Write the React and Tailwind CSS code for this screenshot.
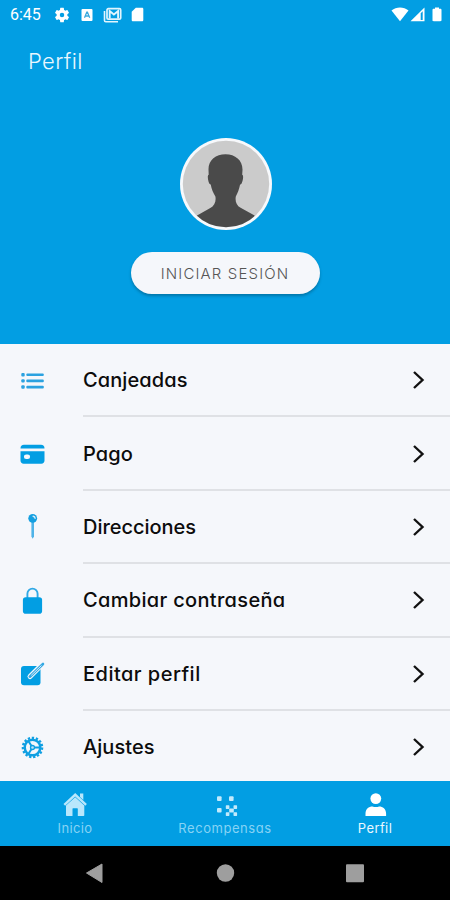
import React, { useState } from 'react';

const ListIcon = () => (
  <svg viewBox="0 0 30 30" className="w-[30px] h-[30px]" fill="#2ba2e0">
    <rect x="4.300" y="7" width="3.400" height="3.400" rx="1" />
    <rect x="4.300" y="13.200" width="3.400" height="3.400" rx="1" />
    <rect x="4.300" y="19.300" width="3.400" height="3.400" rx="1" />
    <rect x="9.300" y="7.400" width="17.500" height="2.700" rx="1" />
    <rect x="9.300" y="13.600" width="17.500" height="2.700" rx="1" />
    <rect x="9.300" y="19.700" width="17.500" height="2.700" rx="1" />
  </svg>
);

const CardIcon = () => (
  <svg viewBox="0 0 30 30" className="w-[30px] h-[30px]" fill="#029ee3">
    <path d="M3.500 9.500c0-2.600 1.200-3.700 3.500-3.700h17c2.300 0 3.500 1.100 3.500 3.700z" />
    <path
      fillRule="evenodd"
      d="M3.500 12.300h24v9.300c0 2-1.200 3.200-3.200 3.200H6.700c-2 0-3.200-1.200-3.200-3.200zM9.200 15.500a2.300 2.300 0 0 0 0 4.600h1.600a2.300 2.300 0 0 0 0-4.600z"
    />
  </svg>
);

const PinIcon = () => (
  <svg viewBox="0 0 30 30" className="w-[30px] h-[30px]">
    <path d="M14.400 9H17v15.500l-1.300 2.300-1.300-2.300z" fill="#4fb3e8" />
    <circle cx="15.700" cy="6.300" r="4.400" fill="#149fe0" />
    <path d="M16.100 4.200a2.300 2.300 0 0 1 2 2.100" stroke="#d4edfa" strokeWidth="1.400" strokeLinecap="round" fill="none" />
  </svg>
);

const LockIcon = () => (
  <svg viewBox="0 0 30 30" className="w-[30px] h-[30px]">
    <path d="M10.400 13V7.700a5.100 5.100 0 0 1 10.200 0V13" fill="none" stroke="#31a9e5" strokeWidth="1.900" />
    <rect x="5.900" y="11.200" width="19.200" height="16.500" rx="2.800" fill="#029ee3" />
  </svg>
);

const EditIcon = () => (
  <svg viewBox="0 0 30 30" className="w-[30px] h-[30px]">
    <rect x="4" y="7" width="19.500" height="19.300" rx="3" fill="#029ee3" />
    <path d="M13 17.500 22.500 8" stroke="#f5f7fb" strokeWidth="5" strokeLinecap="round" />
    <path d="M12.800 17.700 26 5" stroke="#35a9e3" strokeWidth="2.600" strokeLinecap="round" />
    <path d="M14.300 16.300 24.500 6.500" stroke="#e6f3fb" strokeWidth="0.900" />
  </svg>
);

const GearIcon = () => (
  <svg viewBox="0 0 30 30" className="w-[30px] h-[30px]" fill="none" stroke="#0f9fe2">
    <circle cx="15.500" cy="14.500" r="9.700" strokeWidth="2.200" strokeDasharray="2.340 1.724" />
    <circle cx="15.500" cy="14.500" r="7.800" strokeWidth="2.500" />
    <path d="M15.500 14.500h7M15.500 14.500l-4-6.300M15.500 14.500l-4 6.300" strokeWidth="2" />
    <circle cx="15.500" cy="14.500" r="2" strokeWidth="1.300" fill="#bfe4f8" />
  </svg>
);

const menuItems = [
  { label: 'Canjeadas', icon: ListIcon, spacing: 'tracking-[0.1px]' },
  { label: 'Pago', icon: CardIcon, spacing: 'tracking-[0.1px]' },
  { label: 'Direcciones', icon: PinIcon, spacing: 'tracking-[-0.03px]' },
  { label: 'Cambiar contraseña', icon: LockIcon, spacing: 'tracking-[0.32px]' },
  { label: 'Editar perfil', icon: EditIcon, spacing: 'tracking-[0.48px]' },
  { label: 'Ajustes', icon: GearIcon, spacing: 'tracking-[0.05px]' }
];

const HomeIcon = () => (
  <svg viewBox="0 0 26 26" className="w-[26px] h-[26px]" fill="#b9e7fc">
    <path d="M18 3.500h3.300V10L18 7z" />
    <path d="M13.200 3 1.500 13.900l1.600 1.800 10.100-9.300 10.100 9.300 1.600-1.800z" />
    <path d="M13.200 7.200 4 15.600v9.700c0 .4.300.7.700.7h5.800v-7.200c0-.4.200-.6.600-.6h4.100c.4 0 .6.200.6.600V26h5.800c.4 0 .7-.3.700-.7v-9.700z" />
  </svg>
);

const RewardsIcon = () => (
  <svg viewBox="0 0 26 26" className="w-[26px] h-[26px]" fill="#c2eafc">
    <rect x="5" y="6.300" width="4.600" height="4.600" rx="1" />
    <rect x="17" y="6.300" width="4.600" height="4.600" rx="1" />
    <rect x="5" y="18" width="4.600" height="4.600" rx="1" />
    <rect x="13.800" y="15.300" width="3.600" height="3.600" rx=".6" />
    <rect x="21.500" y="15.300" width="3.600" height="3.600" rx=".6" />
    <rect x="17.200" y="18.600" width="4.600" height="4" rx=".6" />
    <rect x="13.800" y="22.300" width="3.600" height="3.600" rx=".6" />
    <rect x="21.500" y="22.300" width="3.600" height="3.600" rx=".6" />
  </svg>
);

const ProfileIcon = () => (
  <svg viewBox="0 0 26 26" className="w-[26px] h-[26px]" fill="#fff">
    <circle cx="13.800" cy="8.600" r="5.400" />
    <path d="M3.500 26v-2.500c0-4.500 3.300-7 7-7 1.800.8 4.800.8 6.600 0 3.700 0 7 2.500 7 7V26z" />
  </svg>
);

const tabs = [
  { id: 'inicio', label: 'Inicio', icon: HomeIcon, spacing: 'tracking-[0.35px]' },
  { id: 'recompensas', label: 'Recompensas', icon: RewardsIcon, spacing: 'tracking-[0.55px]' },
  { id: 'perfil', label: 'Perfil', icon: ProfileIcon, spacing: 'tracking-[0.4px]' }
];

function StatusBar() {
  return (
    <div className="flex h-[29px] items-center pl-[10px] pr-[8px] text-white">
      <span className="w-[44px] font-['Roboto',sans-serif] text-[16px] leading-none">6:45</span>
      <svg viewBox="0 0 24 24" className="h-[18px] w-[18px] -ml-px" fill="currentColor">
        <path d="M19.140 12.940a7 7 0 0 0 0-1.880l2.030-1.580a.5.5 0 0 0 .12-.61l-1.920-3.320a.5.5 0 0 0-.59-.22l-2.390.96a7 7 0 0 0-1.620-.94l-.36-2.540a.5.5 0 0 0-.48-.41h-3.840a.5.5 0 0 0-.47.410l-.36 2.540a7 7 0 0 0-1.620.94l-2.390-.96a.5.5 0 0 0-.59.220L2.740 8.870a.5.5 0 0 0 .12.610l2.030 1.580a7 7 0 0 0 0 1.880l-2.030 1.580a.5.5 0 0 0-.12.610l1.920 3.320a.5.5 0 0 0 .59.220l2.390-.96a7 7 0 0 0 1.620.94l.36 2.540c.05.240.24.410.48.410h3.840a.5.5 0 0 0 .47-.41l.36-2.540a7 7 0 0 0 1.620-.94l2.390.96a.5.5 0 0 0 .59-.22l1.920-3.320a.5.5 0 0 0-.12-.61zM12 15a3 3 0 1 1 0-6 3 3 0 0 1 0 6z" />
      </svg>
      <svg viewBox="0 0 12 14" className="ml-[10px] h-[14px] w-[12px]">
        <rect x=".5" y="1" width="11" height="12" rx="1" fill="#fff" />
        <path d="m3.500 9.800 2.300-5.700h.6l2.300 5.700M4.500 8h3.200" fill="none" stroke="#3aa9dd" strokeWidth="1.300" />
      </svg>
      <svg viewBox="0 0 19 16" className="ml-[10px] h-[16px] w-[19px]" fill="none" stroke="#e2f5fe">
        <path d="M1.500 4v9.500c0 .8.500 1.300 1.300 1.300H15" strokeWidth="1.600" />
        <rect x="4" y="1.700" width="13.700" height="10.500" rx="1.300" strokeWidth="1.700" />
        <path d="M6.700 11.500V4l4.200 3.500L15.100 4v7.500" strokeWidth="1.900" />
      </svg>
      <svg viewBox="0 0 13 15" className="ml-[9px] h-[15px] w-[13px]" fill="#fff">
        <path d="M4.800.8H11c.8 0 1.300.5 1.300 1.300v10.800c0 .8-.5 1.300-1.300 1.300H2c-.8 0-1.300-.5-1.300-1.300V4.800z" />
      </svg>
      <svg viewBox="0 0 18 15" className="ml-auto h-[15px] w-[18px]" fill="#fff">
        <path d="M9 14.300.5 3.500C5.300-.4 12.700-.4 17.500 3.500z" />
      </svg>
      <svg viewBox="0 0 15 15" className="h-[15px] w-[15px] ml-px" fill="#fff">
        <path fillRule="evenodd" d="M.5 14.300 14.500.4v13.900zM10.700 6.300v6.600h2V4.300z" />
      </svg>
      <svg viewBox="0 0 10 15" className="ml-[7px] h-[15px] w-[10px]" fill="#fff">
        <path d="M3 .4h4v1.300h1.300c.8 0 1.200.4 1.200 1.200v10.200c0 .8-.4 1.200-1.200 1.200H1.700c-.8 0-1.200-.4-1.200-1.200V2.900c0-.8.4-1.200 1.200-1.200H3z" />
      </svg>
    </div>
  );
}

function Avatar() {
  return (
    <svg viewBox="0 0 92 92" className="ml-[2px] h-[92px] w-[92px]">
      <defs>
        <clipPath id="avatar">
          <circle cx="46" cy="46" r="43.200" />
        </clipPath>
      </defs>
      <circle cx="46" cy="46" r="46" fill="#f7f9fc" />
      <circle cx="46" cy="46" r="43.200" fill="#cbcbcb" />
      <path
        clipPath="url(#avatar)"
        fill="#4a4a4a"
        d="M45.500 16.300c10 0 17.300 6.300 17 15.700l-.3 4.700c1.500.1 1 5.300-.4 8.300-.5 1.200-1.200 1.600-1.700 1.600-.9 4.500-2.400 8.700-4.300 11.800-.8 4.800.6 9 4.800 11.300l14 7.800V92h-58V77.800l13.700-7.800c4-2.300 6-6.300 5.100-11.500-2.100-3.200-3.900-7.500-4.700-11.900-.9 0-1.700-1-2.200-3-.8-3-1.100-6.700.2-6.900l-.2-5c-.3-9.200 7.200-15.400 17-15.400z"
      />
    </svg>
  );
}

export default function App() {
  const [activeTab, setActiveTab] = useState('perfil');

  return (
    <div className="flex h-[900px] w-[450px] flex-col overflow-hidden bg-[#f5f7fb] font-['Inter','Lato',sans-serif] [font-feature-settings:'cv11']">
      <header className="flex h-[344px] shrink-0 flex-col bg-[#029ee3]">
        <StatusBar />
        <h1 className="mt-[16px] ml-[28px] h-[32px] text-[22px] leading-[32px] font-light tracking-[0.35px] text-[#e9f7fe]">Perfil</h1>
        <div className="mt-[61px] flex flex-col items-center">
          <Avatar />
          <button className="mt-[22px] h-[42px] w-[189px] rounded-full bg-[#f5f7fb] pt-[2px] text-[15px] font-light tracking-[1.15px] text-[#555] shadow-[0_2px_3px_rgba(0,0,0,0.25)]">
            INICIAR SESIÓN
          </button>
        </div>
      </header>

      <main className="flex h-[437px] shrink-0 flex-col overflow-hidden">
        {menuItems.map(({ label, icon: Icon, spacing }) => (
          <div key={label} className="flex h-[73.4px] shrink-0 items-center pl-[17px]">
            <Icon />
            <div className="ml-[36px] flex h-full flex-1 items-center justify-between border-b-2 border-[#dfe1e5] pr-[25px]">
              <span className={`pt-px text-[20px] font-medium whitespace-nowrap text-[#0c0c0c] ${spacing}`}>{label}</span>
              <svg viewBox="0 0 14 20" className="mt-px h-[20px] w-[14px]" fill="none" stroke="#111" strokeWidth="2.400">
                <path d="m3 2 8.500 8L3 18" />
              </svg>
            </div>
          </div>
        ))}
      </main>

      <nav className="grid h-[65px] shrink-0 grid-cols-3 bg-[#029ee3]">
        {tabs.map(({ id, label, icon: Icon, spacing }) => (
          <button key={id} onClick={() => setActiveTab(id)} className="flex flex-col items-center pt-[9px]">
            <Icon />
            <span className={`mt-[4px] text-[13px] leading-[16px] ${spacing} ${activeTab === id ? 'text-[#eaf8ff]' : 'text-[#86d3f5]'}`}>
              {label}
            </span>
          </button>
        ))}
      </nav>

      {/* Android system buttons */}
      <div className="flex h-[54px] shrink-0 items-center bg-black pl-[85px]">
        <svg viewBox="0 0 280 20" className="h-[20px] w-[280px]" fill="#9e9e9e">
          <path d="M1.500 10 17 1v18.500z" stroke="#9e9e9e" strokeLinejoin="round" />
          <circle cx="140.500" cy="10" r="8.700" />
          <rect x="261" y="1.200" width="18" height="18" rx="1" />
        </svg>
      </div>
    </div>
  );
}
